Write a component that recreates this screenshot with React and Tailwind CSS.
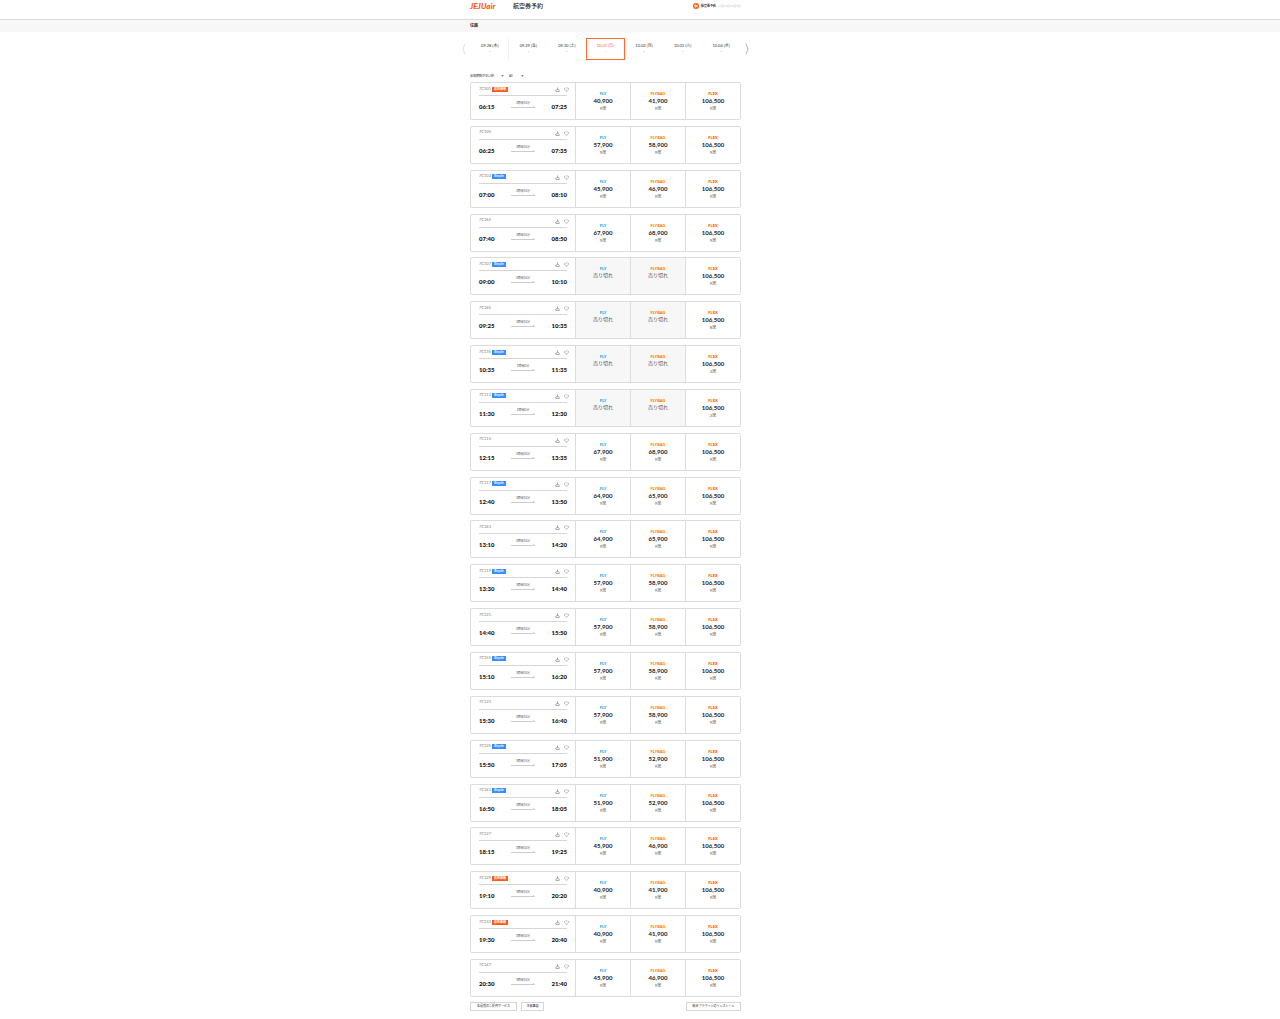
import React from 'react';
import { ChevronLeft, ChevronRight, Plane } from 'lucide-react';

const dates = ['09.28 (木)', '09.29 (金)', '09.30 (土)', '10.01 (日)', '10.02 (月)', '10.03 (火)', '10.04 (水)'];

// [flight, badge, departure, arrival, duration, fly, flybag, flex seats]
const flights = [
    ['7C101', 'sale', '06:15', '07:25', '1時間10分', '40,900', '41,900', 9],
    ['7C105', '', '06:25', '07:35', '1時間10分', '57,900', '58,900', 9],
    ['7C103', 'bicycle', '07:00', '08:10', '1時間10分', '45,900', '46,900', 9],
    ['7C165', '', '07:40', '08:50', '1時間10分', '67,900', '68,900', 9],
    ['7C107', 'bicycle', '09:00', '10:10', '1時間10分', null, null, 9],
    ['7C145', '', '09:25', '10:35', '1時間10分', null, null, 8],
    ['7C135', 'bicycle', '10:35', '11:35', '1時間0分', null, null, 2],
    ['7C113', 'bicycle', '11:30', '12:30', '1時間0分', null, null, 2],
    ['7C115', '', '12:15', '13:35', '1時間20分', '67,900', '68,900', 9],
    ['7C117', 'bicycle', '12:40', '13:50', '1時間10分', '64,900', '65,900', 9],
    ['7C143', '', '13:10', '14:20', '1時間10分', '64,900', '65,900', 9],
    ['7C119', 'bicycle', '13:30', '14:40', '1時間10分', '57,900', '58,900', 9],
    ['7C121', '', '14:40', '15:50', '1時間10分', '57,900', '58,900', 9],
    ['7C155', 'bicycle', '15:10', '16:20', '1時間10分', '57,900', '58,900', 9],
    ['7C123', '', '15:30', '16:40', '1時間10分', '57,900', '58,900', 9],
    ['7C125', 'bicycle', '15:50', '17:05', '1時間15分', '51,900', '52,900', 9],
    ['7C141', 'bicycle', '16:50', '18:05', '1時間15分', '51,900', '52,900', 9],
    ['7C127', '', '18:15', '19:25', '1時間10分', '45,900', '46,900', 9],
    ['7C129', 'sale', '19:10', '20:20', '1時間10分', '40,900', '41,900', 9],
    ['7C133', 'sale', '19:30', '20:40', '1時間10分', '40,900', '41,900', 9],
    ['7C147', '', '20:30', '21:40', '1時間10分', '45,900', '46,900', 9],
];

const Container = ({ className = '', children }) => (
    <div className={`mx-auto w-[340px] pr-[69px] ${className}`}>{children}</div>
);

const SeatIcon = () => (
    <svg viewBox="0 0 12 12" className="size-[5px]" fill="none" stroke="#666" strokeWidth="1.4">
        <path d="M6 1v6M4 5.500L2 8v2.500h8V8L8 5.500" />
    </svg>
);

const MealIcon = () => (
    <svg viewBox="0 0 12 12" className="size-[5px]" fill="none" stroke="#777" strokeWidth="1.4">
        <path d="M3.500 2L1.500 3.500v2.500L4 8.500M8.500 2l2 1.500v2.500L8 8.500M4.500 10h3M5 2.500h2" />
    </svg>
);

const Fare = ({ name, color, price, seats }) => (
    <button
        type="button"
        className={`flex flex-col items-center border-l border-[#dcdcdc] pt-2 ${price ? 'bg-white' : 'bg-[#f7f7f7]'}`}
    >
        <span className={`text-[4px] leading-[6px] font-black ${color}`}>{name}</span>
        {price ? (
            <>
                <span className="text-[6px] leading-[7px] font-bold text-[#222]">{price}</span>
                <span className="mt-[2px] text-[4px] leading-[6px] text-[#555]">{seats}席</span>
            </>
        ) : (
            <span className="text-[5px] leading-[7px] text-[#555]">売り切れ</span>
        )}
    </button>
);

const Flight = ({ flight }) => {
    const [number, badge, departure, arrival, duration, fly, flybag, seats] = flight;
    return (
        <li className="grid h-[38px] grid-cols-[104px_55px_55px_1fr] overflow-hidden rounded-[2px] border border-[#dcdcdc]">
            <div className="px-2">
                <div className="flex h-[13px] items-center gap-px border-b border-[#d6d6d6]">
                    <span className="pb-px text-[4px] leading-[6px] text-[#777]">{number}</span>
                    {badge === 'sale' && (
                        <span className="w-4 bg-[#ff5a14] text-center text-[3px] leading-[5px] font-bold text-white">最低価格</span>
                    )}
                    {badge === 'bicycle' && (
                        <span className="w-[14px] bg-[#3c8cff] text-center text-[3px] leading-[5px] font-bold text-white">Bicycle</span>
                    )}
                    <span className="-mr-[2px] ml-auto flex gap-1 pt-px">
                        <SeatIcon />
                        <MealIcon />
                    </span>
                </div>
                <div className="flex justify-between pt-[3px]">
                    <time className="pt-1 text-[6px] leading-[7px] font-black text-[#111]">{departure}</time>
                    <div className="flex w-6 flex-col items-center pt-[2px]">
                        <span className="text-[3px] leading-[4px] whitespace-nowrap text-[#555]">{duration}</span>
                        <svg viewBox="0 0 24 3" className="h-[3px] w-6" fill="none" stroke="#aaa" strokeWidth="0.6">
                            <path d="M0 2.500h23.500L22 1.200" />
                        </svg>
                    </div>
                    <time className="pt-1 text-[6px] leading-[7px] font-black text-[#111]">{arrival}</time>
                </div>
            </div>
            <Fare name="FLY" color="text-[#00aeef]" price={fly} seats={9} />
            <Fare name="FLYBAG" color="text-[#ff7a00]" price={flybag} seats={9} />
            <Fare name="FLEX" color="text-[#ff5000]" price="106,500" seats={seats} />
        </li>
    );
};

const Select = ({ label, value, className }) => (
    <span className={`flex items-center ${className}`}>
        <select aria-label={label} className="w-full appearance-none text-[3px] leading-[6px] text-[#222]">
            <option>{value}</option>
        </select>
        <svg viewBox="0 0 4 3" className="h-[2px] w-[3px] shrink-0" fill="#888">
            <path d="M0 0h4L2 3z" />
        </svg>
    </span>
);

const Header = () => (
    <header className="border-b border-[#dcdcdc]">
        <Container className="flex h-[19px] items-start pt-[2px]">
            <a href="#" className="w-[43px] text-[8px] leading-[8px] font-black text-[#ff5a14] italic">JEJUair</a>
            <h1 className="text-[6px] leading-[8px] font-medium text-[#222]">航空券予約</h1>
            <div className="ml-auto flex h-2 items-center">
                <span className="flex size-[6px] items-center justify-center rounded-full bg-[#ff5a14]">
                    <Plane className="size-[4px] rotate-45 text-white" fill="white" />
                </span>
                <span className="ml-[2px] text-[3px] leading-[6px] font-bold text-[#222]">航空券予約</span>
                <svg viewBox="0 0 24 4" className="ml-px h-1 w-6" fill="none" stroke="#ccc" strokeWidth="0.6">
                    <path d="M1 2h3M7 2h3M13 2h3M19 2h2" />
                    <circle cx="5.500" cy="2" r="1.300" />
                    <circle cx="11.500" cy="2" r="1.300" />
                    <circle cx="17.500" cy="2" r="1.300" />
                    <circle cx="22.500" cy="2" r="1.300" />
                </svg>
            </div>
        </Container>
    </header>
);

const App = () => {
    return (
        <div className="flex min-h-screen flex-col bg-white font-['Lato','Noto_Sans_CJK_JP',sans-serif]">
            <Header />
            <div className="bg-[#f7f7f7]">
                <Container>
                    <h2 className="text-[4px] leading-[12px] font-bold text-[#333]">往路</h2>
                </Container>
            </div>

            <Container className="flex flex-1 flex-col pt-[6px] pb-2">
                <nav className="-mx-[10px] flex h-[22px] items-center justify-between">
                    <button type="button" aria-label="前へ">
                        <ChevronLeft className="h-5 w-2 text-[#ccc]" strokeWidth={1} preserveAspectRatio="none" />
                    </button>
                    <div className="grid w-[270px] shrink-0 grid-cols-7">
                        {dates.map((date, i) => (
                            <button
                                key={date}
                                type="button"
                                className={`flex h-[22px] flex-col items-center border pt-1 text-[4px] leading-[6px] whitespace-nowrap ${
                                    i === 3 ? 'border-[#ff6a2f] text-[#ff5a14]' : i === 0 ? 'border-transparent border-r-[#f0f0f0] text-[#333]' : 'border-transparent text-[#333]'
                                }`}
                            >
                                <span>{date}</span>
                                <span>-</span>
                            </button>
                        ))}
                    </div>
                    <button type="button" aria-label="次へ">
                        <ChevronRight className="h-5 w-2 text-[#777]" strokeWidth={1} preserveAspectRatio="none" />
                    </button>
                </nav>

                <div className="flex gap-[5px] pt-[13px] pb-[3px]">
                    <Select label="並び替え" value="出発時刻が早い順" className="w-[34px]" />
                    <Select label="フィルター" value="All" className="w-[15px]" />
                </div>

                <ul className="flex flex-1 flex-col justify-between">
                    {flights.map((flight) => (
                        <Flight key={flight[0]} flight={flight} />
                    ))}
                </ul>

                <div className="mt-[5px] flex gap-1 text-[3px] leading-[7px] text-[#222]">
                    <button type="button" className="w-[47px] border border-[#d6d6d6]">各運賃のご提供サービス</button>
                    <button type="button" className="w-[23px] border border-[#d6d6d6]">注意事項</button>
                    <button type="button" className="ml-auto w-[55px] border border-[#d6d6d6]">総合プラグインのインストール</button>
                </div>
            </Container>
        </div>
    );
};

export default App;
